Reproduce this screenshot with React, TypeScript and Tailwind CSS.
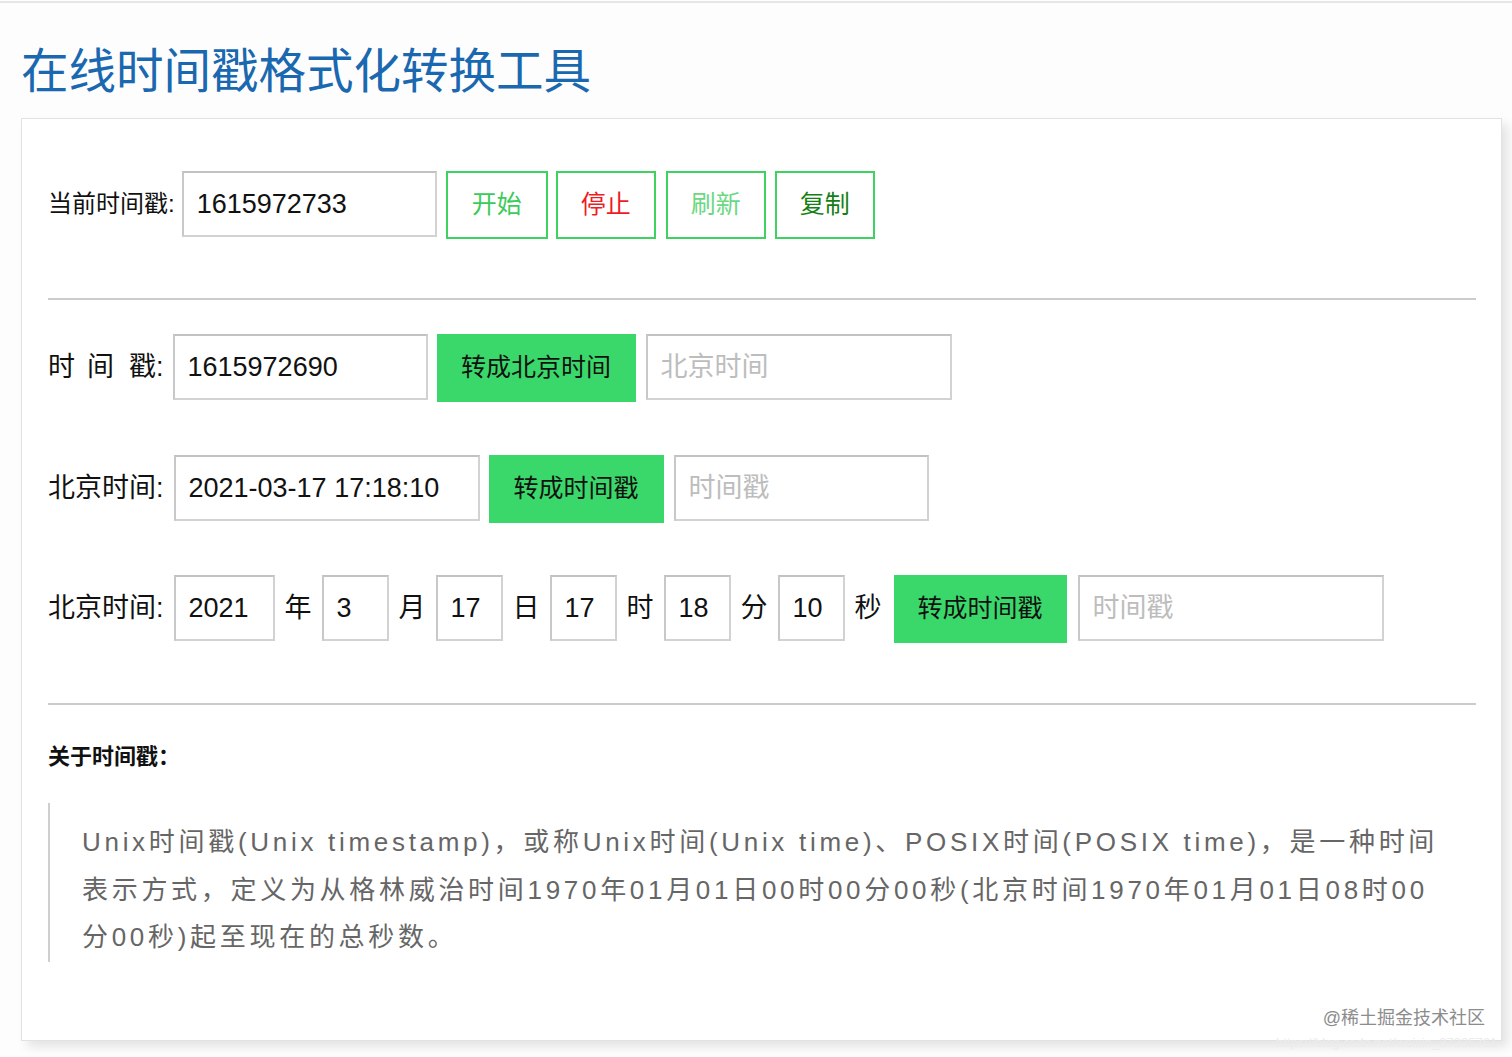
import { useState } from "react"

const font = { fontFamily: '"Liberation Sans", "Noto Sans CJK SC", sans-serif' }

function Field({ value, placeholder, width }: { value?: string; placeholder?: string; width: string }) {
  const [v, setV] = useState(value ?? "")
  return (
    <input
      value={v}
      onChange={(e) => setV(e.target.value)}
      placeholder={placeholder}
      className={`${width} h-[66px] shrink-0 border-2 border-[#d2d2d2] border-t-[#c2c2c2] border-l-[#c8c8c8] bg-white px-[13px] text-[27px] text-[#111] outline-none placeholder:text-[#bdbdbd]`}
    />
  )
}

function GreenButton({ children, width }: { children: React.ReactNode; width: string }) {
  return (
    <button className={`${width} h-[68px] shrink-0 bg-[#3ad86a] text-[25px] text-[#111]`}>{children}</button>
  )
}

function Unit({ children }: { children: React.ReactNode }) {
  return <span className="text-[27px] leading-[66px] text-[#111]">{children}</span>
}

export default function App() {
  return (
    <div style={font} className="relative min-h-[1057px] w-[1512px] overflow-hidden bg-[#fdfdfd]">
      <div className="mt-[1px] h-[2px] w-full bg-[#e6e6e6]" />

      <h1 className="ml-[21px] mt-[40px] mb-[17px] text-[47.5px] font-normal leading-[58px] text-[#1a68b0]">
        在线时间戳格式化转换工具
      </h1>

      <div className="relative ml-[21px] w-[1481px] border border-[#e2e2e2] bg-white pt-[52px] pb-[78px] pl-[26px] pr-[25px] shadow-[6px_6px_10px_rgba(0,0,0,0.1)]">
        {/* current timestamp */}
        <div className="flex items-start">
          <span className="mr-[7px] text-[24px] leading-[66px] text-[#111]">当前时间戳:</span>
          <Field value="1615972733" width="w-[255px]" />
          <button className="ml-[9px] h-[68px] w-[102px] border-2 border-[#3ed35e] bg-white text-[25px] text-[#3ccb5a]">开始</button>
          <button className="ml-[8px] h-[68px] w-[100px] border-2 border-[#3ed35e] bg-white text-[25px] text-[#ee1c25]">停止</button>
          <button className="ml-[10px] h-[68px] w-[100px] border-2 border-[#3ed35e] bg-white text-[25px] text-[#6cd883]">刷新</button>
          <button className="ml-[9px] h-[68px] w-[100px] border-2 border-[#3ed35e] bg-white text-[25px] text-[#157f15]">复制</button>
        </div>

        <div className="mt-[59px] h-[2px] bg-[#cccccc]" />

        <div className="mt-[34px] flex items-start gap-[9px]">
          <span className="text-[27px] leading-[66px] text-[#111]">
            <span className="mr-[12px]">时</span>
            <span className="mr-[15px]">间</span>戳:
          </span>
          <Field value="1615972690" width="w-[255px]" />
          <GreenButton width="w-[199px]">转成北京时间</GreenButton>
          <Field placeholder="北京时间" width="w-[306px] ml-[1px]" />
        </div>

        <div className="mt-[53px] flex items-start gap-[9px]">
          <span className="mr-[1px] text-[27px] leading-[66px] text-[#111]">北京时间:</span>
          <Field value="2021-03-17 17:18:10" width="w-[306px]" />
          <GreenButton width="w-[175px]">转成时间戳</GreenButton>
          <Field placeholder="时间戳" width="w-[255px] ml-[1px]" />
        </div>

        <div className="mt-[52px] flex items-start gap-[10px]">
          <span className="text-[27px] leading-[66px] text-[#111]">北京时间:</span>
          <Field value="2021" width="w-[101px]" />
          <Unit>年</Unit>
          <Field value="3" width="w-[67px]" />
          <Unit>月</Unit>
          <Field value="17" width="w-[67px]" />
          <Unit>日</Unit>
          <Field value="17" width="w-[67px]" />
          <Unit>时</Unit>
          <Field value="18" width="w-[67px]" />
          <Unit>分</Unit>
          <Field value="10" width="w-[67px]" />
          <Unit>秒</Unit>
          <GreenButton width="w-[173px] ml-[2px]">转成时间戳</GreenButton>
          <Field placeholder="时间戳" width="w-[306px] ml-[1px]" />
        </div>

        <div className="mt-[60px] h-[2px] bg-[#cccccc]" />

        <h3 className="mt-[37px] text-[22px] font-bold leading-[30px] text-[#111]">关于时间戳：</h3>

        <blockquote className="mt-[31px] border-l-2 border-[#cfcfcf] pt-4 pl-[32px] pr-[26px]">
          <p className="text-[26px] leading-[47.5px] tracking-[3.7px] text-[#666]">
            Unix时间戳(Unix timestamp)，或称Unix时间(Unix time)、POSIX时间(POSIX time)，是一种时间表示方式，定义为从格林威治时间1970年01月01日00时00分00秒(北京时间1970年01月01日08时00分00秒)起至现在的总秒数。
          </p>
        </blockquote>

        <span className="absolute right-[16px] bottom-[8px] text-[18px] text-[#8c8c8c]">@稀土掘金技术社区</span>
      </div>

      <span className="absolute left-[1276px] top-[1033px] text-[13px] text-[#ececec]">
        https://blog.csdn.net/weixin_37335761
      </span>
    </div>
  )
}
